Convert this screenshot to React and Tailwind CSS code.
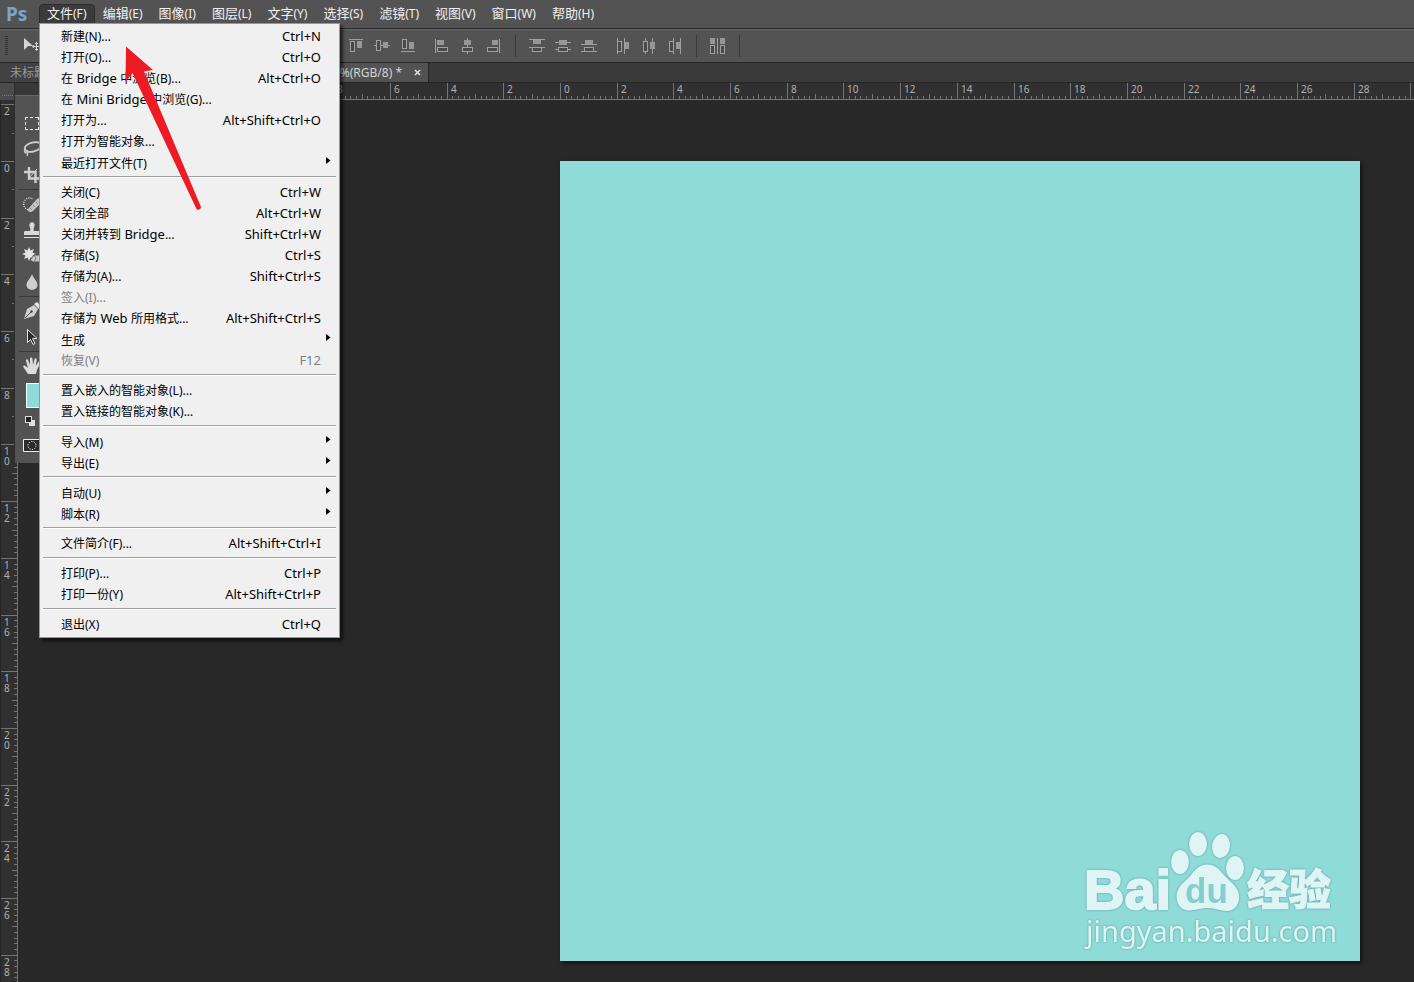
const menus = [
  ["文件", "(F)"],
  ["编辑", "(E)"],
  ["图像", "(I)"],
  ["图层", "(L)"],
  ["文字", "(Y)"],
  ["选择", "(S)"],
  ["滤镜", "(T)"],
  ["视图", "(V)"],
  ["窗口", "(W)"],
  ["帮助", "(H)"],
];

const fileMenu = [
  [
    { label: "新建(N)...", keys: "Ctrl+N" },
    { label: "打开(O)...", keys: "Ctrl+O" },
    { label: "在 Bridge 中浏览(B)...", keys: "Alt+Ctrl+O" },
    { label: "在 Mini Bridge 中浏览(G)..." },
    { label: "打开为...", keys: "Alt+Shift+Ctrl+O" },
    { label: "打开为智能对象..." },
    { label: "最近打开文件(T)", submenu: true },
  ],
  [
    { label: "关闭(C)", keys: "Ctrl+W" },
    { label: "关闭全部", keys: "Alt+Ctrl+W" },
    { label: "关闭并转到 Bridge...", keys: "Shift+Ctrl+W" },
    { label: "存储(S)", keys: "Ctrl+S" },
    { label: "存储为(A)...", keys: "Shift+Ctrl+S" },
    { label: "签入(I)...", disabled: true },
    { label: "存储为 Web 所用格式...", keys: "Alt+Shift+Ctrl+S" },
    { label: "生成", submenu: true },
    { label: "恢复(V)", keys: "F12", disabled: true },
  ],
  [{ label: "置入嵌入的智能对象(L)..." }, { label: "置入链接的智能对象(K)..." }],
  [
    { label: "导入(M)", submenu: true },
    { label: "导出(E)", submenu: true },
  ],
  [
    { label: "自动(U)", submenu: true },
    { label: "脚本(R)", submenu: true },
  ],
  [{ label: "文件简介(F)...", keys: "Alt+Shift+Ctrl+I" }],
  [
    { label: "打印(P)...", keys: "Ctrl+P" },
    { label: "打印一份(Y)", keys: "Alt+Shift+Ctrl+P" },
  ],
  [{ label: "退出(X)", keys: "Ctrl+Q" }],
];

// fill / box / line are [x, y, width, height] on an 18px grid
const alignIcons = {
  top: { name: "顶对齐", line: [[2, 2, 14, 1]], box: [[3, 4, 5, 11]], fill: [[10, 4, 5, 7]] },
  middle: {
    name: "垂直居中对齐",
    line: [[1, 8, 2, 1], [8, 8, 2, 1], [15, 8, 2, 1]],
    box: [[3, 3, 5, 11]],
    fill: [[10, 5, 5, 6]],
  },
  bottom: { name: "底对齐", line: [[2, 14, 14, 1]], box: [[3, 2, 5, 10]], fill: [[10, 5, 5, 7]] },
  left: { name: "左对齐", line: [[3, 2, 1, 14]], box: [[5, 10, 11, 5]], fill: [[5, 3, 7, 5]] },
  center: {
    name: "水平居中对齐",
    line: [[9, 1, 1, 2], [9, 8, 1, 2], [9, 15, 1, 2]],
    box: [[4, 10, 11, 5]],
    fill: [[6, 3, 7, 5]],
  },
  right: { name: "右对齐", line: [[15, 2, 1, 14]], box: [[3, 10, 11, 5]], fill: [[8, 3, 6, 5]] },
  distTop: {
    name: "按顶分布",
    line: [[1, 2, 16, 1], [1, 10, 16, 1]],
    box: [[4, 10, 10, 5]],
    fill: [[5, 3, 8, 4]],
  },
  distMiddle: {
    name: "垂直居中分布",
    line: [[1, 5, 16, 1], [1, 12, 3, 1], [14, 12, 3, 1]],
    box: [[4, 10, 10, 5]],
    fill: [[5, 3, 8, 5]],
  },
  distBottom: {
    name: "按底分布",
    line: [[1, 7, 16, 1], [1, 14, 16, 1]],
    box: [[4, 10, 10, 5]],
    fill: [[5, 3, 8, 4]],
  },
  distLeft: {
    name: "按左分布",
    line: [[3, 1, 1, 16], [10, 1, 1, 16]],
    box: [[3, 4, 5, 11]],
    fill: [[11, 5, 4, 7]],
  },
  distCenter: {
    name: "水平居中分布",
    line: [[5, 1, 1, 3], [5, 15, 1, 2], [12, 1, 1, 16]],
    box: [[3, 4, 5, 11]],
    fill: [[10, 5, 5, 7]],
  },
  distRight: {
    name: "按右分布",
    line: [[7, 1, 1, 16], [14, 1, 1, 16]],
    box: [[3, 4, 5, 11]],
    fill: [[10, 5, 4, 7]],
  },
  auto: {
    name: "自动对齐图层",
    line: [[8, 1, 1, 16]],
    box: [[1, 8, 5, 9], [11, 8, 5, 9]],
    fill: [[1, 1, 5, 6], [11, 1, 5, 6]],
  },
};

// One centimetre at 100% zoom, 72 ppi
const CM = 72 / 2.54;

// Counts in fifths of a centimetre; every second centimetre gets a number
function getTicks(origin, from, to) {
  const ticks = [];
  for (let i = from; i <= to; i++) {
    const major = i % 10 === 0;
    ticks.push({
      at: origin + Math.round((i * CM) / 5),
      size: major ? 16 : i % 5 === 0 ? 5 : 3,
      label: major && i >= -40 && i <= 140 ? String(Math.abs(i / 5)) : null,
    });
  }
  return ticks;
}

function HorizontalRuler() {
  return (
    <svg className="block h-[17px] w-full bg-[#303030]" shapeRendering="crispEdges" aria-hidden="true">
      <rect y="16" width="100%" height="1" fill="#747474" />
      {getTicks(560, -95, 400).map((t) => (
        <g key={t.at}>
          <rect x={t.at} y={16 - t.size} width="1" height={t.size} fill="#747474" />
          {t.label && (
            <text x={t.at + 4} y="10" fontSize="10" fill="#b0b0b0">
              {t.label}
            </text>
          )}
        </g>
      ))}
      <rect width="14" height="17" fill="#4b4b4b" />
      <path d="M2 12.500h12" stroke="#777" strokeDasharray="1 1" />
    </svg>
  );
}

function VerticalRuler() {
  return (
    <svg className="block w-[18px] shrink-0 self-stretch bg-[#303030]" shapeRendering="crispEdges" aria-hidden="true">
      <rect width="1" height="100%" fill="#262626" />
      <rect x="17" width="1" height="100%" fill="#747474" />
      {getTicks(61, -10, 200).map((t) => (
        <g key={t.at}>
          <rect x={17 - t.size} y={t.at} width={t.size} height="1" fill="#747474" />
          {t.label &&
            t.label.split("").map((digit, i) => (
              <text key={i} x="4" y={t.at + 11 + i * 10} fontSize="10" fill="#b0b0b0">
                {digit}
              </text>
            ))}
        </g>
      ))}
    </svg>
  );
}

function AlignButton({ icon }) {
  const { name, line, box, fill } = alignIcons[icon];
  return (
    <button type="button" aria-label={name} className="h-[18px] w-[18px]">
      <svg width="18" height="18" shapeRendering="crispEdges">
        {line.map(([x, y, w, h], i) => (
          <rect key={i} x={x} y={y} width={w} height={h} fill="#a0a0a0" />
        ))}
        {box.map(([x, y, w, h], i) => (
          <rect key={i} x={x + 0.5} y={y + 0.5} width={w - 1} height={h - 1} fill="#4a4a4a" stroke="#a0a0a0" />
        ))}
        {fill.map(([x, y, w, h], i) => (
          <rect key={i} x={x} y={y} width={w} height={h} fill="#979797" />
        ))}
      </svg>
    </button>
  );
}

function AlignGroup({ icons }) {
  return (
    <div className="flex gap-2">
      {icons.map((icon) => (
        <AlignButton key={icon} icon={icon} />
      ))}
    </div>
  );
}

function BarDivider() {
  return <div className="h-[22px] w-px bg-[#383838]" />;
}

function MenuBar() {
  return (
    <nav className="flex h-7 items-center bg-[#535353]">
      <span className="w-[39px] pl-[6px] text-[19px] leading-6 font-bold text-[#7ba3d0]">Ps</span>
      {menus.map(([name, hotkey], i) => (
        <button
          key={name}
          type="button"
          className={`flex h-5 items-center border px-[7px] text-[13px] text-[#f0f0f0] ${
            i === 0 ? "rounded-t-sm border-[#2c2c2c] bg-[#3b3b3b]" : "border-transparent"
          }`}
        >
          {name}
          <span className="text-xs">{hotkey}</span>
        </button>
      ))}
    </nav>
  );
}

function OptionsBar() {
  return (
    <div className="flex h-[34px] items-center border-t border-[#2a2a2a] bg-[#535353] shadow-[inset_0_1px_0_#666]">
      <div className="flex w-[347px] items-center">
        <svg width="39" height="22" shapeRendering="crispEdges" aria-hidden="true">
          {[1, 3, 5, 7, 9, 11, 13, 15, 17, 19].map((y) => (
            <rect key={y} x="5" y={y} width="3" height="1" fill="#353535" />
          ))}
          <path d="M24 3v12l4-4h5z" fill="#d6d6d6" shapeRendering="auto" />
          <path
            d="M32.500 11.500h8M36.500 7.500v8M35 9l1.500-1.500L38 9M35 14l1.500 1.500L38 14M34 10l-1.500 1.500L34 13"
            stroke="#d6d6d6"
            fill="none"
            shapeRendering="auto"
          />
        </svg>
      </div>
      <AlignGroup icons={["top", "middle", "bottom"]} />
      <div className="w-[15px]" />
      <AlignGroup icons={["left", "center", "right"]} />
      <div className="flex w-[26px] justify-center">
        <BarDivider />
      </div>
      <AlignGroup icons={["distTop", "distMiddle", "distBottom"]} />
      <div className="w-4" />
      <AlignGroup icons={["distLeft", "distCenter", "distRight"]} />
      <div className="flex w-[25px] justify-center">
        <BarDivider />
      </div>
      <AlignGroup icons={["auto"]} />
      <div className="w-3" />
      <BarDivider />
    </div>
  );
}

function DocumentTabs() {
  return (
    <div className="flex h-[21px] border-y border-[#262626] bg-[#3a3a3a] text-xs">
      <button type="button" className="w-[200px] border-r border-[#262626] bg-[#424242] pl-[10px] text-left text-[#989898]">
        未标题-1
      </button>
      <div className="flex w-[229px] items-center justify-end gap-3 border-r border-[#262626] bg-[#535353] pr-[6px] text-[#d4d4d4]">
        <span>100%(RGB/8) *</span>
        <button type="button" aria-label="关闭" className="h-2 w-2">
          <svg width="8" height="8" viewBox="0 0 8 8">
            <path d="M1 1l5 5M6 1l-5 5" stroke="#e2e2e2" strokeWidth="1.6" />
          </svg>
        </button>
      </div>
    </div>
  );
}

function Tool({ name, children }) {
  return (
    <button type="button" aria-label={name} className="flex h-[26px] items-center justify-center">
      <svg width="20" height="20" viewBox="0 0 20 20" fill="none" stroke="#d0d0d0">
        {children}
      </svg>
    </button>
  );
}

function ToolDivider() {
  return (
    <div className="flex h-[3px] items-center px-1">
      <div className="h-px flex-1 bg-[#383838]" />
    </div>
  );
}

function ToolPanel() {
  return (
    <aside className="absolute top-[82px] left-[14px] w-[34px] border-l border-[#2b2b2b] bg-[#535353]">
      <div className="h-[14px] border-t border-b border-t-[#262626] border-b-[#666] bg-[#383838]" />
      <div className="flex flex-col pt-[14px] pb-[11px]">
        <Tool name="矩形选框">
          <path
            d="M3.500 7V4.500H6M8 4.500h3M13 4.500h3.500V7M16.500 9v3M16.500 14v2.500H13M11 16.500H8M6 16.500H3.500V14M3.500 12V9"
            stroke="#ececec"
            shapeRendering="crispEdges"
          />
        </Tool>
        <Tool name="套索">
          <ellipse cx="11" cy="8" rx="8.500" ry="4.500" strokeWidth="1.8" transform="rotate(-14 11 8)" />
          <path d="M4 11c-2 0-2 3 0 3 3-.500 2-3-1-2.500M5 13c1 1 1 2 0 4" strokeWidth="1.300" />
        </Tool>
        <Tool name="裁剪">
          <path d="M7 2v11.500h12M2 7h11.500v11" strokeWidth="2.400" />
          <path d="M7 13l8-9" />
        </Tool>
        <ToolDivider />
        <Tool name="污点修复画笔">
          <path d="M8 16a6 6 0 1 1 3-11" stroke="#ececec" strokeWidth="1.300" strokeDasharray="1 1.200" />
          <path d="M6 15l9-10 4-2v6l-8 8c-2 2-6 1-5-2z" fill="#c4c4c4" stroke="none" />
          <path d="M8 14l2 2M11 11l2 2M14 8l2 2" stroke="#6a6a6a" strokeDasharray="1 1" />
        </Tool>
        <Tool name="仿制图章">
          <path d="M8 11c1-2 0-3-.500-5a2.700 2.700 0 1 1 5 0c-.500 2-1.500 3-.500 5h6v4H2v-3l1-1z" fill="#d8d8d8" stroke="none" />
          <path d="M2 17.500h16" stroke="#e4e4e4" />
        </Tool>
        <Tool name="背景橡皮擦">
          <path
            d="M7 1l1.500 3.500L12 3l-1.500 3.500L14 8l-3.500 1.500L12 13l-3.500-1.500L7 15l-1.500-3.500L2 13l1.500-3.500L0 8l3.500-1.500L2 3l3.500 1.500z"
            fill="#e4e4e4"
            stroke="none"
          />
          <path d="M8 14l4-5h8v7h-9z" fill="#c6c6c6" stroke="#535353" />
          <path d="M12 9l2 3-2 4" stroke="#777" />
        </Tool>
        <Tool name="模糊">
          <path d="M10 2c1 4 5.500 7 5.500 11a5.500 5 0 0 1-11 0C4.500 9 9 6 10 2z" fill="#cfcfcf" stroke="none" />
        </Tool>
        <ToolDivider />
        <Tool name="钢笔">
          <path d="M2 18l3-10 7-4 4 4-4 7z" fill="#d0d0d0" stroke="none" />
          <path d="M12 3l3-2 4 4-2 3z" fill="#e4e4e4" stroke="none" />
          <path d="M3 17l6-6" stroke="#444" />
          <circle cx="9.500" cy="10.500" r="1.200" fill="#444" stroke="none" />
        </Tool>
        <Tool name="路径选择">
          <path d="M5.500 2.500v13l3-3 2.500 5 2-1-2.500-5H15z" fill="#2d2d2d" stroke="#e0e0e0" />
        </Tool>
        <ToolDivider />
        <Tool name="抓手">
          <path
            d="M6 18l-4-6c-2-2 0-3.500 1.500-2L6 12 4 5c-.300-2 1.700-2.300 2.200-.500L8 9V3c0-2 2.500-2 2.500 0l.500 6 1.500-5.500c.500-1.800 2.500-1.300 2.200.500L13.800 10l2.500-4c1-1.500 2.700-.500 2 1L15 14l-1 4z"
            fill="#dcdcdc"
            stroke="none"
          />
        </Tool>
        <button type="button" aria-label="前景色" className="mt-1 ml-[11px] h-[25px] w-5 border border-white bg-[#8fdbd8]" />
        <button type="button" aria-label="默认颜色" className="mt-2 ml-[10px] h-3 w-3">
          <svg width="12" height="12" shapeRendering="crispEdges">
            <path d="M4 4h6v6H4z" fill="#e0e0e0" />
            <path d="M.5 .5h6v6h-6z" fill="#222" stroke="#e0e0e0" />
          </svg>
        </button>
        <button type="button" aria-label="快速蒙版" className="mt-[11px] ml-2 h-[13px] w-[19px]">
          <svg width="19" height="13">
            <path d="M.5 .5h18v12H.5z" fill="#2b2b2b" stroke="#eee" />
            <circle cx="9" cy="6.500" r="4" fill="none" stroke="#fff" strokeDasharray="1.200 1.300" />
          </svg>
        </button>
      </div>
    </aside>
  );
}

// English product words are set one size up beside the Chinese text
function MenuLabel({ text }) {
  return (
    <span className="flex-1 text-left whitespace-pre">
      {text.split(/([A-Za-z ]{2,})/).map((part, i) =>
        i % 2 ? (
          <span key={i} className="text-[13px]">
            {part}
          </span>
        ) : (
          part
        )
      )}
    </span>
  );
}

function FileMenu() {
  return (
    <div className="absolute top-[23px] left-[39px] w-[301px] border border-[#979797] bg-[#f0f0f0] py-[2px] text-xs text-black shadow-[3px_3px_3px_rgba(0,0,0,0.6)]">
      {fileMenu.map((group, i) => (
        <div key={group[0].label}>
          {i > 0 && <div className="mx-[3px] mt-[3px] mb-1 h-[2px] border-t border-b border-t-[#a0a0a0] border-b-white" />}
          {group.map((item) => (
            <button
              key={item.label}
              type="button"
              disabled={item.disabled}
              className={`flex h-[21px] w-full items-center pr-2 pl-[21px] disabled:text-[#808080] ${
                item.submenu ? "pt-[2px]" : ""
              }`}
            >
              <MenuLabel text={item.label} />
              {item.keys && <span className="pr-[10px] text-[13px]">{item.keys}</span>}
              {item.submenu && (
                <svg width="5" height="11" className="self-start" aria-hidden="true">
                  <path d="M0 3l4.500 3.500L0 10z" fill="#000" />
                </svg>
              )}
            </button>
          ))}
        </div>
      ))}
    </div>
  );
}

function Watermark() {
  return (
    <svg
      className="absolute right-[10px] bottom-[6px] [filter:drop-shadow(0_0_1px_rgba(60,130,130,0.7))]"
      width="280"
      height="135"
      viewBox="0 0 280 135"
      fill="#dff4f4"
      aria-label="Baidu 经验"
    >
      <text x="14" y="89" fontSize="56" fontWeight="700" fontFamily="Liberation Sans, sans-serif" stroke="#dff4f4" strokeWidth="2">
        Bai
      </text>
      <ellipse cx="110" cy="42" rx="9" ry="12" />
      <ellipse cx="128" cy="24" rx="9" ry="12" />
      <ellipse cx="151" cy="26" rx="9" ry="12" transform="rotate(8 151 26)" />
      <ellipse cx="165" cy="48" rx="9" ry="12" />
      <path d="M137 44.500C129 44.500 125 50 121 55 116 61 107 66 106.500 76 106 86 113 91 120 90.500 127 90 131 88 138 88 146 88 150 91 157 91 165 91 170 84 169 75 168 66 158 60 153 54 149 49 145 44.500 137 44.500Z" />
      <text x="115" y="83" fontSize="35" fontWeight="700" fill="#84cfcc" fontFamily="Liberation Sans, sans-serif">
        du
      </text>
      <text x="177" y="85" fontSize="42" fontWeight="900" fontFamily="Noto Sans CJK SC, sans-serif" stroke="#dff4f4">
        经验
      </text>
      <text x="16" y="122" fontSize="29">
        jingyan.baidu.com
      </text>
    </svg>
  );
}

function Pointer() {
  return (
    <svg className="pointer-events-none absolute top-[40px] left-[120px]" width="90" height="175" aria-hidden="true">
      <path d="M6 6.500L33 30l-9 1.500L81 167c0 2-3 4-4.500 2L12.500 33 5.500 42z" fill="#ed1c24" />
    </svg>
  );
}

export default function App() {
  return (
    <div className="relative flex min-h-screen flex-col overflow-hidden bg-[#282828] font-['Noto_Sans','Noto_Sans_CJK_SC',sans-serif]">
      <MenuBar />
      <OptionsBar />
      <DocumentTabs />
      <HorizontalRuler />
      <main className="flex flex-1">
        <VerticalRuler />
        <div className="pt-[61px] pb-[21px] pl-[542px]">
          <div className="relative h-[800px] w-[800px] bg-[#8fdbd8] shadow-[2px_2px_4px_rgba(0,0,0,0.6)]">
            <Watermark />
          </div>
        </div>
      </main>
      <ToolPanel />
      <FileMenu />
      <Pointer />
    </div>
  );
}
